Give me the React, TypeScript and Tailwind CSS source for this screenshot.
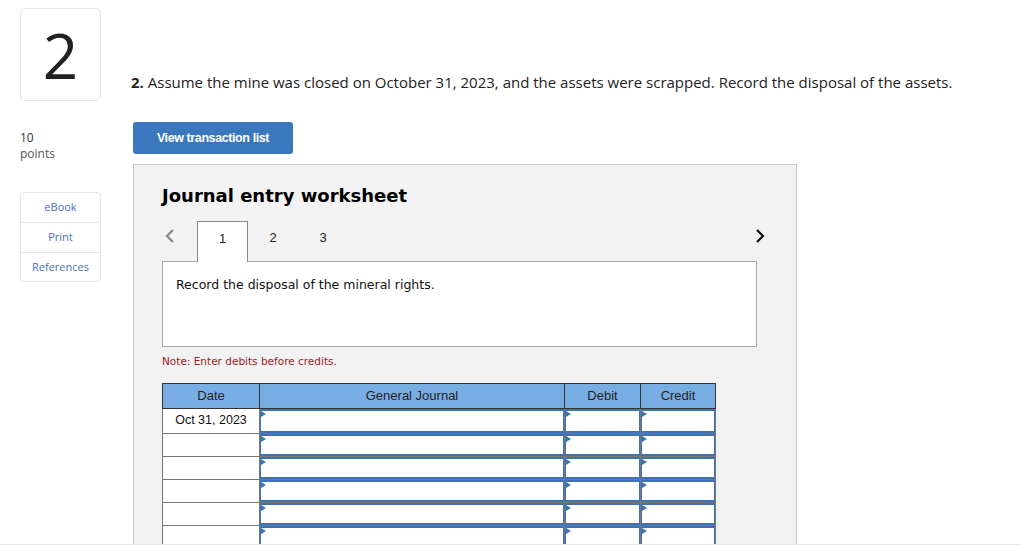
import React from 'react';

const rows = ['Oct 31, 2023', '', '', '', '', ''];

function InputCell() {
  // celda de ingreso con borde azul y triangulito arriba a la izquierda
  return (
    <td className="p-0 border border-[#777] h-[23px]">
      <div className="relative h-full border-x border-y-2 border-[#3d72b7] bg-white">
        <span className="absolute left-0 top-0 w-0 h-0 border-y-[3px] border-y-transparent border-l-[5px] border-l-[#3d72b7]" />
      </div>
    </td>
  );
}

export default function App() {
  return (
    <div className="w-[1021px] h-[547px] overflow-hidden bg-white flex flex-col">
      <div className="h-[544px] overflow-hidden flex">
        {/* columna izquierda */}
        <div className="w-[131px] shrink-0 pl-5 pt-2">
          <div className="w-[81px] h-[93px] border border-[#e6e6e6] rounded-[5px] flex items-center justify-center">
            <span className="text-[62px] leading-none text-[#222] font-['Open_Sans',sans-serif] font-normal">2</span>
          </div>
          <div className="mt-[29px] text-[12px] leading-[16px] text-[#333] font-['Open_Sans',sans-serif]">
            <div>10</div>
            <div className="text-[#555]">points</div>
          </div>
          <div className="mt-[30px] w-[81px] border border-[#e6e6e6] rounded-[4px] text-[11px] text-[#4a72b8] font-['Open_Sans',sans-serif] text-center">
            <div className="h-[30px] flex items-center justify-center border-b border-[#e6e6e6]">eBook</div>
            <div className="h-[30px] flex items-center justify-center border-b border-[#e6e6e6]">Print</div>
            <div className="h-[28px] flex items-center justify-center">References</div>
          </div>
        </div>

        {/* contenido */}
        <div className="flex-1 pt-[72px]">
          <p className="text-[15px] leading-[20px] text-[#222] font-['Open_Sans',sans-serif]">
            <b className="font-bold">2.</b> Assume the mine was closed on October 31, 2023, and the assets were scrapped. Record the disposal of the assets.
          </p>
          <button className="mt-[30px] ml-[2px] w-[160px] h-[32px] rounded-[3px] bg-[#3a77bc] text-white text-[12.5px] font-bold tracking-[-0.4px] font-['Liberation_Sans',Arial,sans-serif]">
            View transaction list
          </button>
          <div className="mt-[10px] ml-[2px] w-[664px] h-[400px] bg-[#f2f2f2] border border-[#c8c8c8] pl-[28px] pr-[39px] pt-[20px]">
            <h2 className="text-[18px] leading-[22px] font-bold text-black font-['DejaVu_Sans',Verdana,sans-serif]">
              Journal entry worksheet
            </h2>
            <div className="mt-[14px] flex items-end h-[40px]">
              <div className="w-[35px] h-full flex items-start pt-[7px] pl-[2px]">
                <svg width="12" height="16" viewBox="0 0 12 16"><path d="M9 2 L3 8 L9 14" fill="none" stroke="#888" strokeWidth="2.2" /></svg>
              </div>
              <div className="w-[51px] h-[41px] -mb-px relative z-10 bg-white border border-b-0 border-[#8a8a8a] flex items-start pt-[7px] justify-center text-[13px] text-[#222] font-['Liberation_Sans',Arial,sans-serif]">
                1
              </div>
              <div className="w-[50px] h-full flex items-start pt-[7px] justify-center text-[13px] text-[#222] font-['Liberation_Sans',Arial,sans-serif]">2</div>
              <div className="w-[50px] h-full flex items-start pt-[7px] justify-center text-[13px] text-[#222] font-['Liberation_Sans',Arial,sans-serif]">3</div>
              <div className="flex-1 h-full flex items-start pt-[7px] justify-end">
                <svg width="12" height="16" viewBox="0 0 12 16" className="-mr-[9px]"><path d="M3 2 L9 8 L3 14" fill="none" stroke="#111" strokeWidth="2.2" /></svg>
              </div>
            </div>
            <div className="h-[86px] bg-white border border-[#aaa] px-[13px] pt-[14px] text-[12.5px] text-[#111] font-['DejaVu_Sans',Verdana,sans-serif]">
              Record the disposal of the mineral rights.
            </div>
            <p className="mt-[7px] text-[10.5px] text-[#a11a1e] font-['DejaVu_Sans',Verdana,sans-serif]">
              Note: Enter debits before credits.
            </p>
            <table className="mt-[13px] border-collapse table-fixed w-[553px] font-['Liberation_Sans',Arial,sans-serif] text-[13px]">
              <colgroup>
                <col className="w-[97px]" />
                <col className="w-[305px]" />
                <col className="w-[76px]" />
                <col className="w-[75px]" />
              </colgroup>
              <thead>
                <tr className="h-[25px] bg-[#79aee4] text-[#222]">
                  <th className="font-normal border border-[#333]">Date</th>
                  <th className="font-normal border border-[#333]">General Journal</th>
                  <th className="font-normal border border-[#333]">Debit</th>
                  <th className="font-normal border border-[#333]">Credit</th>
                </tr>
              </thead>
              <tbody>
                {rows.map((d, i) => (
                  <tr key={i} className={i === 0 ? 'h-[25px]' : 'h-[23px]'}>
                    <td className="p-0 border border-[#777] bg-white text-center text-[#111] text-[12.5px]">{d}</td>
                    <InputCell />
                    <InputCell />
                    <InputCell />
                  </tr>
                ))}
              </tbody>
            </table>
          </div>
        </div>
      </div>
      <div className="flex-1 border-t border-[#e8e8e8] bg-white" />
    </div>
  );
}
